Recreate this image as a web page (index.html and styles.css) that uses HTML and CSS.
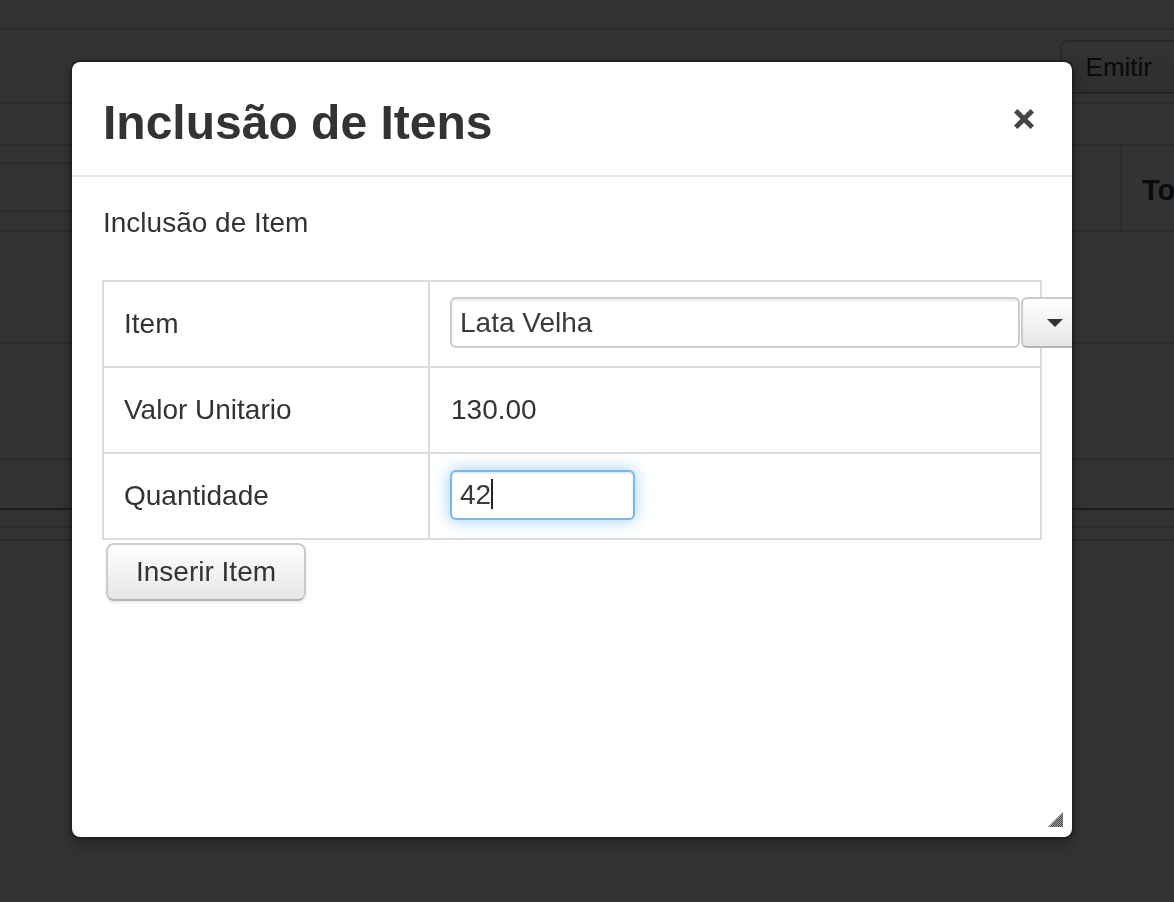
FILE: index.html
```html
<!DOCTYPE html>
<html lang="pt-BR">
<head>
<meta charset="utf-8">
<title>Inclusão de Itens</title>
<link rel="stylesheet" href="styles.css">
</head>
<body>
<div class="page">
  <div class="topbar"></div>
  <div class="toolbar">
    <button type="button" class="btn btn-emit">Emitir</button>
  </div>
  <div class="bg-row bg-row1"></div>
  <div class="bg-row bg-head">
    <div class="bg-head-main"><div class="bg-field"></div></div>
    <div class="bg-head-total">Total</div>
  </div>
  <div class="bg-row bg-row2"></div>
  <div class="bg-row bg-row3"></div>
  <div class="bg-row bg-row4"></div>
  <div class="bg-row bg-row5"></div>
  <div class="bg-row bg-row6"></div>
</div>

<div class="backdrop"></div>

<div class="modal">
  <div class="modal-header">
    <h3 class="modal-title">Inclusão de Itens</h3>
    <svg class="close" width="20" height="20" viewBox="0 0 20 20" aria-label="Fechar">
      <path d="M3.5 3.5 L16.5 16.5 M16.5 3.5 L3.5 16.5" stroke="#333" stroke-width="5" stroke-linecap="square" fill="none"/>
    </svg>
  </div>
  <div class="modal-body">
    <p class="lead-text">Inclusão de Item</p>
    <table class="form-table">
      <tr>
        <td class="label">Item</td>
        <td class="value">
          <div class="input-append">
            <div class="input input-wide">Lata Velha</div>
            <button type="button" class="dd-btn"><span class="caret"></span></button>
          </div>
        </td>
      </tr>
      <tr>
        <td class="label">Valor Unitario</td>
        <td class="value"><span class="value-text">130.00</span></td>
      </tr>
      <tr>
        <td class="label">Quantidade</td>
        <td class="value">
          <div class="input input-focus">42<span class="cursor"></span></div>
        </td>
      </tr>
    </table>
    <div class="actions">
      <button type="button" class="btn btn-insert">Inserir Item</button>
    </div>
  </div>
  <div class="resize-handle">
    <svg width="15" height="15" viewBox="0 0 15 15">
      <defs>
        <pattern id="chk" width="2" height="2" patternUnits="userSpaceOnUse">
          <rect width="2" height="2" fill="#9a9a9a"/>
          <rect width="1" height="1" fill="#505050"/>
          <rect x="1" y="1" width="1" height="1" fill="#505050"/>
        </pattern>
      </defs>
      <polygon points="0,15 15,0 15,15" fill="url(#chk)"/>
    </svg>
  </div>
</div>
</body>
</html>
```

FILE: styles.css
```css
html, body {
  margin: 0;
  padding: 0;
  height: 100%;
  overflow: hidden;
  background: #fff;
  font-family: "Liberation Sans", Arial, Helvetica, sans-serif;
  color: #333;
}

/* ---------- page behind the backdrop ---------- */
.page {
  width: 100%;
}

.topbar {
  height: 28px;
  border-bottom: 2px solid #ddd;
}

.toolbar {
  height: 62px;
  padding-top: 10px;
  border-bottom: 2px solid #ddd;
  display: flex;
  justify-content: flex-end;
  align-items: flex-start;
}

.btn {
  font-family: "Liberation Sans", Arial, Helvetica, sans-serif;
  color: #333;
  background: linear-gradient(#ffffff, #e6e6e6);
  border: 2px solid #ccc;
  border-bottom-color: #b3b3b3;
  cursor: pointer;
  margin: 0;
}

.btn-emit {
  height: 54px;
  padding: 0 24px;
  font-size: 26px;
  line-height: 50px;
  border-radius: 8px 0 0 8px;
  margin-right: -4px;
}

.bg-row {
  border-bottom: 2px solid #ddd;
}
.bg-row1 { height: 40px; }
.bg-head {
  height: 84px;
  display: flex;
}
.bg-head-main {
  flex: 1;
  padding-top: 16px;
}
.bg-field {
  width: 1000px;
  height: 46px;
  border-top: 2px solid #ddd;
  border-bottom: 2px solid #ddd;
}
.bg-head-total {
  width: 32px;
  border-left: 2px solid #ddd;
  padding: 4px 0 0 20px;
  font-weight: bold;
  font-size: 29px;
  line-height: 80px;
  white-space: nowrap;
  overflow: hidden;
}
.bg-row2 { height: 110px; }
.bg-row3 { height: 114px; }
.bg-row4 { height: 48px; border-bottom-color: #8c8c8c; }
.bg-row5 { height: 16px; }
.bg-row6 { height: 11px; }

.backdrop {
  position: fixed;
  inset: 0;
  background: rgba(0, 0, 0, 0.8);
}

/* ---------- modal ---------- */
.modal {
  position: absolute;
  left: 70px;
  top: 60px;
  width: 1004px;
  height: 779px;
  box-sizing: border-box;
  background: #fff;
  background-clip: padding-box;
  border: 2px solid rgba(0, 0, 0, 0.3);
  border-radius: 10px;
  box-shadow: 0 6px 14px rgba(0, 0, 0, 0.3);
  overflow: hidden;
  color: #333;
}

.modal-header {
  display: flex;
  align-items: flex-start;
  padding: 31px 30px 22px 31px;
  border-bottom: 2px solid #e5e5e5;
}

.modal-title {
  flex: 1;
  margin: 0;
  font-size: 48px;
  line-height: 60px;
  font-weight: bold;
  color: #333;
}

.close {
  flex: none;
  margin: 16px 8px 0 0;
  opacity: 0.9;
}

.modal-body {
  padding: 26px 30px 0;
}

.lead-text {
  margin: 0 0 37px 1px;
  font-size: 28px;
  line-height: 40px;
}

.form-table {
  width: 940px;
  table-layout: fixed;
  border-collapse: separate;
  border-spacing: 0;
  border-top: 2px solid #ddd;
  border-left: 2px solid #ddd;
}

.form-table td {
  height: 84px;
  padding: 0 20px;
  border-right: 2px solid #ddd;
  border-bottom: 2px solid #ddd;
  vertical-align: middle;
  font-size: 28px;
  line-height: 40px;
  white-space: nowrap;
}

.form-table td.label {
  width: 286px;
  padding: 0 18px 0 20px;
}

.value-text {
  margin-left: 1px;
}

.input-append {
  display: flex;
  gap: 1px;
  margin-top: -3px;
}

.input {
  flex: none;
  box-sizing: border-box;
  border: 2px solid #ccc;
  border-radius: 6px;
  padding: 0 8px;
  font-size: 28px;
  color: #3a3a3a;
  background: #fff;
  box-shadow: inset 0 2px 2px rgba(0, 0, 0, 0.075);
}

.input-wide {
  width: 570px;
  height: 51px;
  line-height: 47px;
}

.input-focus {
  width: 185px;
  height: 50px;
  line-height: 46px;
  margin-top: -2px;
  border-color: rgba(82, 168, 236, 0.8);
  box-shadow: inset 0 2px 2px rgba(0, 0, 0, 0.075), 0 0 16px rgba(82, 168, 236, 0.6);
}

.cursor {
  display: inline-block;
  width: 2px;
  height: 30px;
  background: #222;
  vertical-align: -5px;
}

.dd-btn {
  flex: none;
  box-sizing: border-box;
  width: 68px;
  height: 51px;
  padding: 0;
  margin: 0;
  border: 2px solid #ccc;
  border-bottom-color: #b3b3b3;
  border-radius: 6px 0 0 6px;
  background: linear-gradient(#ffffff, #e6e6e6);
  display: flex;
  align-items: center;
  justify-content: center;
}

.caret {
  width: 0;
  height: 0;
  border-top: 8px solid #333;
  border-left: 8px solid transparent;
  border-right: 8px solid transparent;
}

.actions {
  display: flex;
  padding: 3px 0 0 4px;
}

.btn-insert {
  height: 58px;
  padding: 0 28px;
  font-size: 28px;
  line-height: 54px;
  border-radius: 8px;
  box-shadow: 0 2px 3px rgba(0, 0, 0, 0.08);
}

.resize-handle {
  position: absolute;
  right: 9px;
  bottom: 10px;
  width: 15px;
  height: 15px;
}
.resize-handle svg {
  display: block;
}
```
